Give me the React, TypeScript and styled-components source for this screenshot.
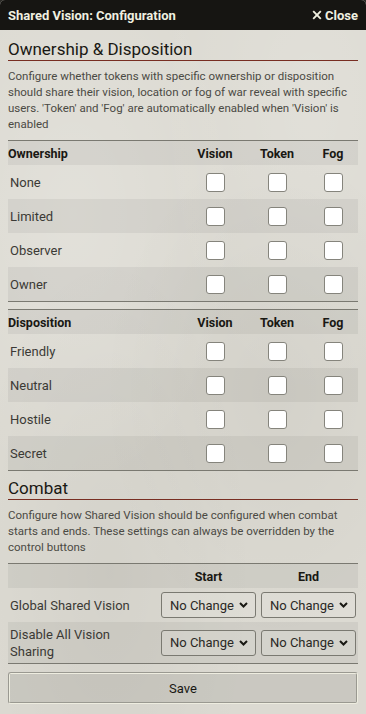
import React from "react";
import styled, { createGlobalStyle } from "styled-components";

const GlobalStyle = createGlobalStyle`
  html, body {
    margin: 0;
    padding: 0;
    background: #2b2a26;
  }
  body {
    font-family: Roboto, "Noto Sans", sans-serif;
    color: #191813;
  }
  * {
    box-sizing: border-box;
  }
`;

const ownership = ["None", "Limited", "Observer", "Owner"];
const disposition = ["Friendly", "Neutral", "Hostile", "Secret"];
const combat = ["Global Shared Vision", "Disable All Vision Sharing"];

const CHECK_COLS = "1fr 62px 62px 50px";
const COMBAT_COLS = "1fr 101px 99px";

function App() {
  return (
    <>
      <GlobalStyle />
      <Window>
        <Header>
          <Title>Shared Vision: Configuration</Title>
          <CloseLink>
            <svg width="10" height="10" viewBox="0 0 10 10">
              <path
                d="M1.2 1.2 L8.8 8.8 M8.8 1.2 L1.2 8.8"
                stroke="#f0f0e0"
                strokeWidth="1.9"
              />
            </svg>
            Close
          </CloseLink>
        </Header>

        <Content>
          <SectionTitle>Ownership &amp; Disposition</SectionTitle>
          <Notes>
            Configure whether tokens with specific ownership or disposition
            should share their vision, location or fog of war reveal with
            specific users. 'Token' and 'Fog' are automatically enabled when
            'Vision' is enabled
          </Notes>

          <CheckTable title="Ownership" rows={ownership} />
          <CheckTable title="Disposition" rows={disposition} $gap />

          <SectionTitle $top={6}>Combat</SectionTitle>
          <Notes>
            Configure how Shared Vision should be configured when combat
            starts and ends. These settings can always be overridden by the
            control buttons
          </Notes>

          <Table>
            <Row $cols={COMBAT_COLS} $h={24} $shade>
              <span />
              <HeadCell $center>Start</HeadCell>
              <HeadCell $center>End</HeadCell>
            </Row>
            {combat.map((label, i) => (
              <Row key={label} $cols={COMBAT_COLS} $h={i === 0 ? 34 : 41} $shade={i % 2 === 1}>
                <Label $wrap>{label}</Label>
                <SelectBox>
                  <Select defaultValue="none">
                    <option value="none">No Change</option>
                  </Select>
                  <Chevron />
                </SelectBox>
                <SelectBox>
                  <Select defaultValue="none">
                    <option value="none">No Change</option>
                  </Select>
                  <Chevron />
                </SelectBox>
              </Row>
            ))}
          </Table>

          <SaveButton type="button">Save</SaveButton>
        </Content>
      </Window>
    </>
  );
}

function CheckTable({ title, rows, $gap }: { title: string; rows: string[]; $gap?: boolean }) {
  return (
    <Table $gap={$gap}>
      <Row $cols={CHECK_COLS} $h={24} $shade>
        <HeadCell>{title}</HeadCell>
        <HeadCell $center>Vision</HeadCell>
        <HeadCell $center>Token</HeadCell>
        <HeadCell $center>Fog</HeadCell>
      </Row>
      {rows.map((r, i) => (
        <Row key={r} $cols={CHECK_COLS} $h={34} $shade={i % 2 === 1}>
          <Label>{r}</Label>
          <Checkbox type="checkbox" />
          <Checkbox type="checkbox" />
          <Checkbox type="checkbox" />
        </Row>
      ))}
    </Table>
  );
}

function Chevron() {
  return (
    <ChevronIcon width="9" height="6" viewBox="0 0 9 6">
      <path d="M1 1 L4.5 4.5 L8 1" stroke="#191813" strokeWidth="2" fill="none" />
    </ChevronIcon>
  );
}

export default App;

const Window = styled.div`
  width: 366px;
  height: 714px;
  display: flex;
  flex-direction: column;
  border-radius: 5px 5px 0 0;
  overflow: hidden;
  background-color: #dcdad2;
  background-image:
    radial-gradient(ellipse at 20% 30%, rgba(255, 255, 255, 0.18), transparent 40%),
    radial-gradient(ellipse at 75% 55%, rgba(0, 0, 0, 0.04), transparent 45%),
    radial-gradient(ellipse at 30% 80%, rgba(0, 0, 0, 0.035), transparent 40%),
    radial-gradient(ellipse at 85% 15%, rgba(255, 255, 255, 0.15), transparent 35%);
`;

const Header = styled.header`
  height: 30px;
  flex: none;
  display: flex;
  align-items: center;
  justify-content: space-between;
  padding: 0 8px;
  background: #161512;
  color: #f0f0e0;
`;

const Title = styled.h4`
  margin: 0;
  font-size: 13px;
  font-weight: 700;
`;

const CloseLink = styled.a`
  display: flex;
  align-items: center;
  gap: 3px;
  font-size: 13px;
  font-weight: 700;
  cursor: pointer;
`;

const Content = styled.div`
  flex: 1;
  display: flex;
  flex-direction: column;
  padding: 8px 8px 0;
`;

const SectionTitle = styled.h2<{ $top?: number }>`
  margin: ${(p) => p.$top ?? 0}px 0 0;
  font-size: 17px;
  font-weight: 400;
  line-height: 22px;
  color: #191813;
  border-bottom: 1px solid #782e22;
`;

const Notes = styled.p`
  margin: 7px 0 8px;
  font-size: 11.5px;
  line-height: 16px;
  color: #4b4a44;
`;

const Table = styled.div<{ $gap?: boolean }>`
  margin-top: ${(p) => (p.$gap ? 7 : 0)}px;
  border-top: 1px solid #7a7971;
  border-bottom: 1px solid #7a7971;
`;

const Row = styled.div<{ $cols: string; $h: number; $shade?: boolean }>`
  display: grid;
  grid-template-columns: ${(p) => p.$cols};
  align-items: center;
  min-height: ${(p) => p.$h}px;
  background: ${(p) => (p.$shade ? "rgba(0, 0, 0, 0.05)" : "transparent")};
`;

const HeadCell = styled.span<{ $center?: boolean }>`
  font-size: 12.5px;
  font-weight: 700;
  text-align: ${(p) => (p.$center ? "center" : "left")};
  color: #191813;
`;

const Label = styled.span<{ $wrap?: boolean }>`
  padding-left: 2px;
  padding-right: ${(p) => (p.$wrap ? 12 : 0)}px;
  font-size: 13px;
  line-height: 17px;
  color: #3b3a35;
`;

const Checkbox = styled.input`
  appearance: none;
  justify-self: center;
  width: 19px;
  height: 19px;
  margin: 0;
  background: #fff;
  border: 1px solid #85847c;
  border-radius: 3px;
`;

const SelectBox = styled.div`
  position: relative;
  justify-self: center;
  width: 95px;
`;

const Select = styled.select`
  appearance: none;
  width: 100%;
  height: 26px;
  padding: 0 0 0 8px;
  font-family: Roboto, "Noto Sans", sans-serif;
  font-size: 13px;
  color: #2a2925;
  background: rgba(255, 255, 255, 0.1);
  border: 1px solid #7a7971;
  border-radius: 3px;
`;

const ChevronIcon = styled.svg`
  position: absolute;
  right: 8px;
  top: 10px;
  pointer-events: none;
`;

const SaveButton = styled.button`
  margin-top: 8px;
  height: 32px;
  font-family: Roboto, "Noto Sans", sans-serif;
  font-size: 13px;
  color: #191813;
  background: rgba(0, 0, 0, 0.08);
  border: 2px groove #eeede0;
  border-radius: 3px;
`;
